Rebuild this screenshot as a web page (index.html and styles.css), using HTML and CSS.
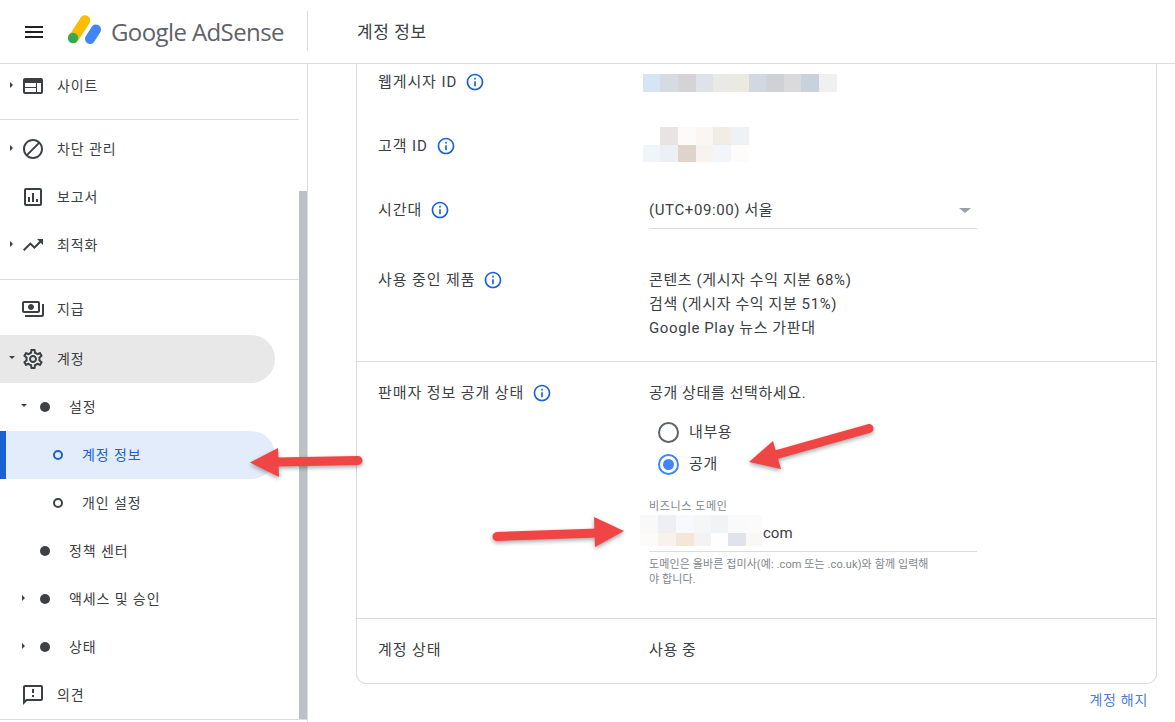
FILE: index.html
```html
<!DOCTYPE html>
<html lang="ko">
<head>
<meta charset="utf-8">
<title>계정 정보</title>
<link rel="stylesheet" href="styles.css">
</head>
<body>
<svg class="defs" width="0" height="0" aria-hidden="true">
  <symbol id="i-web" viewBox="0 0 24 24"><path d="M20 4H4c-1.1 0-1.99.9-1.99 2L2 18c0 1.1.9 2 2 2h16c1.1 0 2-.9 2-2V6c0-1.1-.9-2-2-2zm-5 14H4v-4h11v4zm0-5H4V9h11v4zm5 5h-4V9h4v9z"/></symbol>
  <symbol id="i-block" viewBox="0 0 24 24"><path d="M12 2C6.48 2 2 6.48 2 12s4.48 10 10 10 10-4.48 10-10S17.52 2 12 2zM4 12c0-4.42 3.58-8 8-8 1.85 0 3.55.63 4.9 1.69L5.69 16.9C4.63 15.55 4 13.85 4 12zm8 8c-1.85 0-3.55-.63-4.9-1.69L18.31 7.1C19.37 8.45 20 10.15 20 12c0 4.42-3.58 8-8 8z"/></symbol>
  <symbol id="i-report" viewBox="0 0 24 24"><path d="M19 3H5c-1.1 0-2 .9-2 2v14c0 1.1.9 2 2 2h14c1.1 0 2-.9 2-2V5c0-1.1-.9-2-2-2zm0 16H5V5h14v14zM7 12h2v5H7zM11 8h2v9h-2zM15 14h2v3h-2z"/></symbol>
  <symbol id="i-trend" viewBox="0 0 24 24"><path d="M16 6l2.29 2.29-4.88 4.88-4-4L2 16.59 3.41 18l6-6 4 4 6.3-6.29L22 12V6z"/></symbol>
  <symbol id="i-pay" viewBox="0 0 24 24"><path d="M19 14V6c0-1.1-.9-2-2-2H3c-1.1 0-2 .9-2 2v8c0 1.1.9 2 2 2h14c1.1 0 2-.9 2-2zm-2 0H3V6h14v8zm-7-7c-1.66 0-3 1.34-3 3s1.34 3 3 3 3-1.34 3-3-1.34-3-3-3zm13 0v11c0 1.1-.9 2-2 2H4v-2h17V7h2z"/></symbol>
  <symbol id="i-gear" viewBox="0 0 24 24"><path d="M19.43 12.98c.04-.32.07-.64.07-.98 0-.34-.03-.66-.07-.98l2.11-1.65c.19-.15.24-.42.12-.64l-2-3.46c-.09-.16-.26-.25-.44-.25-.06 0-.12.01-.17.03l-2.49 1c-.52-.4-1.08-.73-1.69-.98l-.38-2.65C14.46 2.18 14.25 2 14 2h-4c-.25 0-.46.18-.49.42l-.38 2.65c-.61.25-1.17.59-1.69.98l-2.49-1c-.06-.02-.12-.03-.18-.03-.17 0-.34.09-.43.25l-2 3.46c-.13.22-.07.49.12.64l2.11 1.65c-.04.32-.07.65-.07.98 0 .33.03.66.07.98l-2.11 1.65c-.19.15-.24.42-.12.64l2 3.46c.09.16.26.25.44.25.06 0 .12-.01.17-.03l2.49-1c.52.4 1.08.73 1.69.98l.38 2.65c.03.24.24.42.49.42h4c.25 0 .46-.18.49-.42l.38-2.65c.61-.25 1.17-.59 1.69-.98l2.49 1c.06.02.12.03.18.03.17 0 .34-.09.43-.25l2-3.46c.12-.22.07-.49-.12-.64l-2.11-1.65zm-1.98-1.71c.04.31.05.52.05.73 0 .21-.02.43-.05.73l-.14 1.13.89.7 1.08.84-.7 1.21-1.27-.51-1.04-.42-.9.68c-.43.32-.84.56-1.25.73l-1.06.43-.16 1.13-.2 1.35h-1.4l-.19-1.35-.16-1.13-1.06-.43c-.43-.18-.83-.41-1.23-.71l-.91-.7-1.06.43-1.27.51-.7-1.21 1.08-.84.89-.7-.14-1.13c-.03-.31-.05-.54-.05-.74s.02-.43.05-.73l.14-1.13-.89-.7-1.08-.84.7-1.21 1.27.51 1.04.42.9-.68c.43-.32.84-.56 1.25-.73l1.06-.43.16-1.13.2-1.35h1.39l.19 1.35.16 1.13 1.06.43c.43.18.83.41 1.23.71l.91.7 1.06-.43 1.27-.51.7 1.21-1.07.85-.89.7.14 1.13zM12 8c-2.21 0-4 1.79-4 4s1.79 4 4 4 4-1.79 4-4-1.79-4-4-4zm0 6c-1.1 0-2-.9-2-2s.9-2 2-2 2 .9 2 2-.9 2-2 2z"/></symbol>
  <symbol id="i-feedback" viewBox="0 0 24 24"><path d="M20 2H4c-1.1 0-1.99.9-1.99 2L2 22l4-4h14c1.1 0 2-.9 2-2V4c0-1.1-.9-2-2-2zm0 14H5.17l-.59.59-.58.58V4h16v12zm-9-4h2v2h-2zm0-6h2v4h-2z"/></symbol>
  <symbol id="i-info" viewBox="0 0 24 24"><path d="M11 7h2v2h-2zm0 4h2v6h-2zm1-9C6.48 2 2 6.48 2 12s4.48 10 10 10 10-4.48 10-10S17.52 2 12 2zm0 18c-4.41 0-8-3.59-8-8s3.59-8 8-8 8 3.59 8 8-3.59 8-8 8z"/></symbol>
</svg>

<header class="topbar">
  <div class="brand">
    <button class="menu" aria-label="메뉴"><span></span><span></span><span></span></button>
    <svg class="logo" width="38" height="32" viewBox="0 0 38 32">
      <line class="logo-yellow" x1="10" y1="22.5" x2="21" y2="5.5"/>
      <line class="logo-blue" x1="26" y1="24" x2="32" y2="14.5"/>
      <circle class="logo-green" cx="9" cy="23" r="5.2"/>
    </svg>
    <span class="wordmark">Google AdSense</span>
  </div>
  <h1 class="page-title">계정 정보</h1>
</header>

<div class="shell">
  <aside class="sidebar">
    <nav class="nav">
      <div class="group group-first">
        <a class="row row-short"><i class="caret right"></i><svg class="icon"><use href="#i-web"/></svg><span>사이트</span></a>
      </div>
      <div class="group">
        <a class="row"><i class="caret right"></i><svg class="icon"><use href="#i-block"/></svg><span>차단 관리</span></a>
        <a class="row"><i class="caret"></i><svg class="icon"><use href="#i-report"/></svg><span>보고서</span></a>
        <a class="row"><i class="caret right"></i><svg class="icon"><use href="#i-trend"/></svg><span>최적화</span></a>
      </div>
      <div class="group group-last">
        <a class="row"><i class="caret"></i><svg class="icon"><use href="#i-pay"/></svg><span>지급</span></a>
        <a class="row row-open"><i class="caret down"></i><svg class="icon"><use href="#i-gear"/></svg><span>계정</span></a>
        <a class="row level2"><i class="caret down"></i><i class="dot"></i><span>설정</span></a>
        <a class="row level3 row-selected"><i class="ring"></i><span>계정 정보</span></a>
        <a class="row level3"><i class="ring"></i><span>개인 설정</span></a>
        <a class="row level2"><i class="caret"></i><i class="dot"></i><span>정책 센터</span></a>
        <a class="row level2"><i class="caret right"></i><i class="dot"></i><span>액세스 및 승인</span></a>
        <a class="row level2"><i class="caret right"></i><i class="dot"></i><span>상태</span></a>
        <a class="row"><i class="caret"></i><svg class="icon"><use href="#i-feedback"/></svg><span>의견</span></a>
      </div>
    </nav>
    <div class="scrolltrack"><div class="scrollthumb"></div></div>
  </aside>

  <main class="main">
    <section class="card">
      <div class="section section-top">
        <div class="field">
          <div class="label">웹게시자 ID <svg class="info"><use href="#i-info"/></svg></div>
          <div class="value">
            <svg class="blur blur-one" width="194" height="18" viewBox="0 0 194 18" shape-rendering="crispEdges">
              <rect x="0" width="17" height="18" fill="#d5e5f3"/><rect x="17" width="18" height="18" fill="#d6dae3"/><rect x="35" width="18" height="18" fill="#d5d3d5"/><rect x="53" width="17" height="18" fill="#dde3e9"/><rect x="70" width="18" height="18" fill="#e9eae8"/><rect x="88" width="18" height="18" fill="#ece9e0"/><rect x="106" width="17" height="18" fill="#d2d8e2"/><rect x="123" width="18" height="18" fill="#cfd1d5"/><rect x="141" width="17" height="18" fill="#dadadc"/><rect x="158" width="18" height="18" fill="#c7d2dc"/><rect x="176" width="18" height="18" fill="#f0f0f0"/>
            </svg>
          </div>
        </div>
        <div class="field">
          <div class="label">고객 ID <svg class="info"><use href="#i-info"/></svg></div>
          <div class="value">
            <svg class="blur blur-two" width="106" height="35" viewBox="0 0 106 35" shape-rendering="crispEdges">
              <rect x="17" width="18" height="18" fill="#e8e4e4"/><rect x="35" width="18" height="18" fill="#fdfbf8"/><rect x="53" width="17" height="18" fill="#faf6f2"/><rect x="70" width="18" height="18" fill="#f1ece6"/><rect x="88" width="18" height="18" fill="#eef2f5"/>
              <rect y="18" width="17" height="17" fill="#eff5f9"/><rect x="17" y="18" width="18" height="17" fill="#eceff4"/><rect x="35" y="18" width="18" height="17" fill="#dfd3cb"/><rect x="53" y="18" width="17" height="17" fill="#f8f3ee"/><rect x="70" y="18" width="18" height="17" fill="#f2f6fb"/><rect x="88" y="18" width="18" height="17" fill="#fefcfa"/>
            </svg>
          </div>
        </div>
        <div class="field">
          <div class="label">시간대 <svg class="info"><use href="#i-info"/></svg></div>
          <div class="value select"><span>(UTC+09:00) 서울</span><i class="select-caret"></i></div>
        </div>
        <div class="field field-last">
          <div class="label">사용 중인 제품 <svg class="info"><use href="#i-info"/></svg></div>
          <div class="value">콘텐츠 (게시자 수익 지분 68%)<br>검색 (게시자 수익 지분 51%)<br>Google Play 뉴스 가판대</div>
        </div>
      </div>

      <div class="section section-seller">
        <div class="field field-last">
          <div class="label">판매자 정보 공개 상태 <svg class="info"><use href="#i-info"/></svg></div>
          <div class="value">
            <p class="prompt">공개 상태를 선택하세요.</p>
            <div class="radio-row"><i class="radio"></i><span>내부용</span></div>
            <div class="radio-row"><i class="radio radio-on"></i><span>공개</span></div>
            <div class="domain">
              <div class="domain-label">비즈니스 도메인</div>
              <div class="domain-input">
                <svg class="blur blur-three" width="122" height="31" viewBox="0 0 122 31" shape-rendering="crispEdges">
                  <rect width="18" height="18" fill="#f9f9f9"/><rect x="18" width="18" height="18" fill="#eeeff2"/><rect x="36" width="18" height="18" fill="#f8f9fc"/><rect x="54" width="17" height="18" fill="#f5f6f6"/><rect x="71" width="17" height="18" fill="#f1f3f4"/><rect x="88" width="18" height="18" fill="#fafafa"/><rect x="106" width="16" height="18" fill="#fbfbfb"/>
                  <rect y="18" width="18" height="13" fill="#fcfbfa"/><rect x="18" y="18" width="18" height="13" fill="#f9f1ee"/><rect x="36" y="18" width="18" height="13" fill="#f6e6da"/><rect x="54" y="18" width="17" height="13" fill="#f3f3f3"/><rect x="71" y="18" width="17" height="13" fill="#fefefe"/><rect x="88" y="18" width="18" height="13" fill="#e0e3ec"/><rect x="106" y="18" width="16" height="13" fill="#faf8f5"/>
                </svg>
                <span>com</span>
              </div>
              <p class="domain-help">도메인은 올바른 접미사(예: .com 또는 .co.uk)와 함께 입력해<br>야 합니다.</p>
            </div>
          </div>
        </div>
      </div>

      <div class="section section-status">
        <div class="field field-last">
          <div class="label">계정 상태</div>
          <div class="value">사용 중</div>
        </div>
      </div>
    </section>
    <div class="card-footer"><a class="link">계정 해지</a></div>
  </main>
</div>

<svg class="arrows" width="1175" height="722" viewBox="0 0 1175 722" aria-hidden="true">
  <g class="arrow">
    <path class="shaft" d="M276 462 L358 460.5"/>
    <polygon class="head" points="250,462.5 278,448 279,477"/>
  </g>
  <g class="arrow">
    <path class="shaft" d="M775 455 L869 428.5"/>
    <polygon class="head" points="749,462 773,441 781,469"/>
  </g>
  <g class="arrow">
    <path class="shaft" d="M497 536.5 L598 533"/>
    <polygon class="head" points="624,531 594,517 595,547"/>
  </g>
</svg>
</body>
</html>
```

FILE: styles.css
```css
* { box-sizing: border-box; }
html, body { margin: 0; height: 100%; overflow: hidden; background: #fff; }
body {
  position: relative;
  font-family: Roboto, "Noto Sans CJK KR", sans-serif;
  color: #3c4043;
  font-size: 15px;
}
.defs { position: absolute; }

/* top bar */
.topbar {
  height: 64px;
  display: flex;
  align-items: center;
  border-bottom: 1px solid #dadce0;
}
.brand {
  width: 308px;
  height: 40px;
  display: flex;
  align-items: center;
  border-right: 1px solid #dadce0;
  padding-left: 25px;
  margin-top: -1px;
}
.menu {
  width: 18px;
  height: 12px;
  padding: 0;
  margin: 2px 0 0;
  border: 0;
  background: none;
  display: flex;
  flex-direction: column;
  justify-content: space-between;
}
.menu span { display: block; height: 2px; background: #202124; }
.logo { margin: 0 0 0 21px; flex: none; }
.logo-yellow { stroke: #fbbc04; stroke-width: 10.5; stroke-linecap: round; }
.logo-blue { stroke: #4285f4; stroke-width: 10; stroke-linecap: round; }
.logo-green { fill: #34a853; }
.wordmark {
  margin-left: 9px;
  font-family: "Open Sans", sans-serif;
  font-size: 24px;
  letter-spacing: -0.6px;
  color: #5f6368;
  white-space: nowrap;
}
.page-title {
  margin: -2px 0 0 49px;
  font-size: 17px;
  font-weight: 400;
  letter-spacing: 0.6px;
  color: #3c4043;
}

.shell { display: flex; height: 658px; }

/* sidebar */
.sidebar {
  width: 308px;
  flex: none;
  display: flex;
  border-right: 1px solid #dadce0;
  align-items: flex-start;
  height: 100%;
}
.nav { width: 299px; flex: none; }
.group { padding: 5px 0 10px; border-bottom: 1px solid #dadce0; }
.group-first { padding: 0 0 11px; }
.group-last { padding-bottom: 0; width: 307px; }
.scrolltrack { width: 8px; flex: none; height: 655px; }
.scrollthumb { margin-top: 127px; height: 528px; background: #bdc1c6; }

.row {
  height: 48px;
  width: 275px;
  display: flex;
  align-items: center;
  font-size: 14px;
  letter-spacing: 0.9px;
  color: #3c4043;
  padding-left: 9px;
  border-radius: 0 24px 24px 0;
}
.row span { margin-top: -3px; white-space: nowrap; }
.row-short { height: 44px; }
.row-open { background: #e8e8e8; }
.group-last > .row:nth-child(2) { margin-top: 2px; }
.row-selected {
  background: #e3ecfa;
  box-shadow: inset 6px 0 0 #1a62d2;
  color: #1a62d2;
}
.level2 { padding-left: 21px; }
.level3 { padding-left: 53px; }

.caret { width: 12px; height: 8px; flex: none; display: block; position: relative; }
.caret.right::before {
  content: "";
  display: block;
  margin: 0 0 0 1px;
  width: 0; height: 0;
  border-left: 3px solid #3c4043;
  border-top: 3.5px solid transparent;
  border-bottom: 3.5px solid transparent;
}
.caret.down::before {
  content: "";
  display: block;
  margin: 1px 0 0 0;
  width: 0; height: 0;
  border-top: 3px solid #3c4043;
  border-left: 3.5px solid transparent;
  border-right: 3.5px solid transparent;
}
.icon { width: 24px; height: 24px; fill: #3c4043; flex: none; margin-right: 12px; }
.dot { width: 10px; height: 10px; border-radius: 50%; background: #3c4043; flex: none; margin: 0 19px 0 7px; }
.ring { width: 10px; height: 10px; border-radius: 50%; border: 2px solid currentColor; flex: none; margin-right: 19px; }
.row-selected .ring { border-color: #1a62d2; }

/* main */
.main { flex: 1; padding: 0 18px 0 48px; }
.card {
  width: 801px;
  height: 620px;
  border: 1px solid #dadce0;
  border-top: 0;
  border-radius: 0 0 10px 10px;
}
.section { padding: 0 0 0 21px; border-bottom: 1px solid #dadce0; }
.section-top { padding-top: 6px; height: 298px; }
.section-seller { padding-top: 19px; height: 257px; }
.section-status { padding-top: 19px; border-bottom: 0; }
.field { display: flex; margin-bottom: 40px; line-height: 24px; }
.field-last { margin-bottom: 0; }
.label { width: 271px; flex: none; letter-spacing: 0.9px; display: flex; align-items: center; gap: 8px; height: 24px; white-space: nowrap; }
.info { width: 20px; height: 20px; fill: #1a62d2; flex: none; }
.value { width: 328px; font-size: 15px; letter-spacing: 0.6px; white-space: nowrap; }
.blur { display: block; }
.blur-one { margin: 4px 0 0 -6px; height: 18px; }
.blur-two { margin: -7px 0 -4px -6px; }
.select {
  height: 31px;
  border-bottom: 1px solid #dadce0;
  display: flex;
  justify-content: space-between;
  align-items: flex-start;
  padding-right: 6px;
}
.field:has(.select) { margin-bottom: 46px; height: 24px; }
.select-caret {
  margin-top: 10px;
  width: 0; height: 0;
  border-top: 5px solid #9aa0a6;
  border-left: 6px solid transparent;
  border-right: 6px solid transparent;
}
.prompt { margin: 0; }
.radio-row { display: flex; align-items: center; height: 32px; padding-left: 9px; gap: 10px; }
.radio-row:first-of-type { margin-top: 11px; }
.radio { width: 21px; height: 21px; border-radius: 50%; border: 2px solid #5f6368; flex: none; }
.radio-on { border-color: #4285f4; position: relative; }
.radio-on::after { content: ""; position: absolute; inset: 3px; background: #4285f4; border-radius: 50%; }
.domain { margin-top: 20px; }
.domain-label { font-size: 11px; line-height: 14px; color: #80868b; letter-spacing: 0.6px; }
.domain-input {
  display: flex;
  align-items: center;
  height: 37px;
  border-bottom: 1px solid #dadce0;
  padding-bottom: 5px;
  margin-top: 1px;
}
.blur-three { margin-left: -9px; flex: none; }
.domain-input span { margin-left: 1px; margin-top: 5px; letter-spacing: 0; }
.domain-help { margin: 5px 0 0; font-size: 11px; line-height: 15px; color: #80868b; letter-spacing: 0.1px; }
.card-footer { width: 792px; text-align: right; margin-top: 5px; }
.link { font-size: 14px; letter-spacing: 0.7px; color: #4a80d4; line-height: 22px; }

/* annotation arrows */
.arrows { position: absolute; left: 0; top: 0; pointer-events: none; }
.arrow { filter: drop-shadow(0 2px 2px rgba(0,0,0,.35)); }
.shaft { fill: none; stroke: #f04545; stroke-width: 9; stroke-linecap: round; }
.head { fill: #f04545; }
```
